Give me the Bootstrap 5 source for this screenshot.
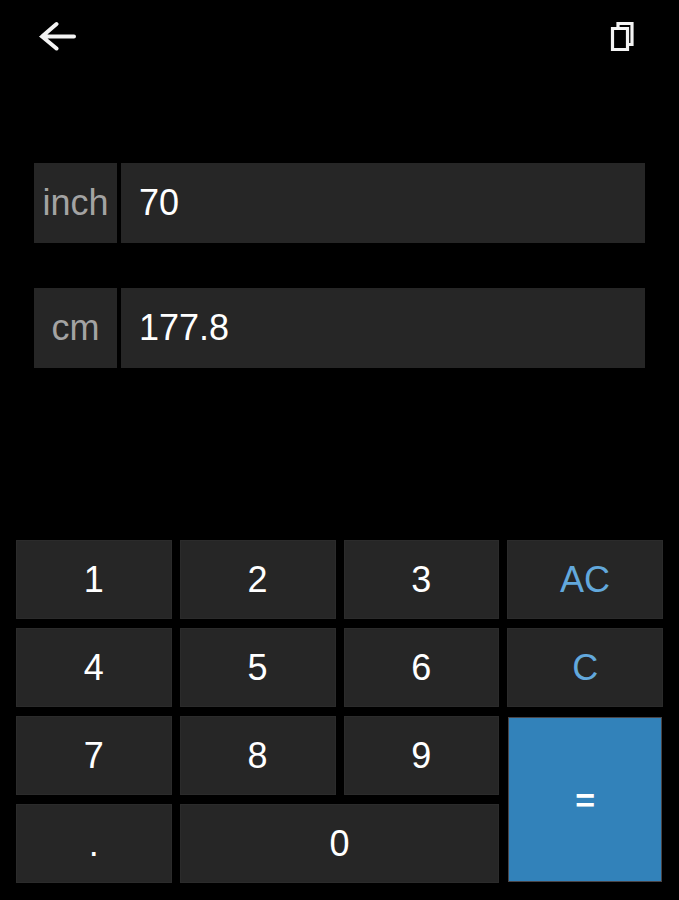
<!DOCTYPE html>
<html lang="en">
<head>
<meta charset="utf-8">
<meta name="viewport" content="width=device-width, initial-scale=1">
<title>Inch to cm converter</title>
<link href="https://cdn.jsdelivr.net/npm/bootstrap@5.3.0/dist/css/bootstrap.min.css" rel="stylesheet">
<style>
  body { background: #000; color: #fff; font-family: "Liberation Sans", Arial, sans-serif; font-size: 36px; line-height: 40px; }
  .topbar { padding: 16px 39px 0; }
  .icon-btn { line-height: 0; }
  .fields { padding: 107px 34px 0; gap: 45px; }
  .field-row { gap: 4px; }
  .unit { width: 83px; height: 80px; background: #262626; color: #a3a3a3; }
  .value { height: 80px; min-width: 0; padding: 0 18px; background: #262626; color: #fff; font-size: 36px; }
  .keypad { display: grid; grid-template-columns: repeat(4, 1fr); grid-auto-rows: 79px; gap: 9px 8px; padding: 0 16px 17px; }
  .key { --bs-btn-color: #fff; --bs-btn-bg: #262626; --bs-btn-border-color: #2b2b2b; --bs-btn-hover-color: #fff; --bs-btn-hover-bg: #333; --bs-btn-font-size: 36px; --bs-btn-line-height: 40px; --bs-btn-padding-y: 0; }
  .key-clear { --bs-btn-color: #62a8dc; --bs-btn-hover-color: #62a8dc; }
  .key-equals { --bs-btn-bg: #3282ba; --bs-btn-hover-bg: #3b8dc7; --bs-btn-border-color: #4a4548; --bs-btn-font-size: 34px; --bs-btn-font-weight: 700; grid-row: span 2; margin: 1px; }
  .key-zero { grid-column: span 2; }
</style>
</head>
<body>
<div class="min-vh-100 d-flex flex-column">
  <header class="topbar d-flex justify-content-between align-items-center">
    <button type="button" class="icon-btn btn p-0 border-0" aria-label="Back">
      <svg width="38" height="40" viewBox="0 0 38 40" fill="none" stroke="#f4f4f4" stroke-width="4" stroke-linecap="round"><path d="M17.500 8 3 20.500 17.500 32.500M3 20.500h32"/></svg>
    </button>
    <button type="button" class="icon-btn btn p-0 border-0" aria-label="Copy">
      <svg width="30" height="40" viewBox="0 0 30 40" fill="none" stroke="#f4f4f4" stroke-width="3.200"><path d="M2.500 12.500h15v21h-15zM8 12V7.500h14V28.500H18"/></svg>
    </button>
  </header>

  <main class="flex-grow-1 d-flex flex-column justify-content-between">
    <div class="fields d-flex flex-column">
      <div class="field-row d-flex">
        <label class="unit d-flex align-items-center justify-content-center" for="inch">inch</label>
        <input id="inch" class="value flex-fill border-0 rounded-0" type="text" inputmode="decimal" value="70">
      </div>
      <div class="field-row d-flex">
        <label class="unit d-flex align-items-center justify-content-center" for="cm">cm</label>
        <input id="cm" class="value flex-fill border-0 rounded-0" type="text" inputmode="decimal" value="177.8">
      </div>
    </div>

    <div class="keypad">
      <button type="button" class="key btn rounded-0">1</button>
      <button type="button" class="key btn rounded-0">2</button>
      <button type="button" class="key btn rounded-0">3</button>
      <button type="button" class="key key-clear btn rounded-0">AC</button>
      <button type="button" class="key btn rounded-0">4</button>
      <button type="button" class="key btn rounded-0">5</button>
      <button type="button" class="key btn rounded-0">6</button>
      <button type="button" class="key key-clear btn rounded-0">C</button>
      <button type="button" class="key btn rounded-0">7</button>
      <button type="button" class="key btn rounded-0">8</button>
      <button type="button" class="key btn rounded-0">9</button>
      <button type="button" class="key key-equals btn rounded-0">=</button>
      <button type="button" class="key btn rounded-0">.</button>
      <button type="button" class="key key-zero btn rounded-0">0</button>
    </div>
  </main>
</div>
<script src="https://cdn.jsdelivr.net/npm/bootstrap@5.3.0/dist/js/bootstrap.bundle.min.js"></script>
</body>
</html>
